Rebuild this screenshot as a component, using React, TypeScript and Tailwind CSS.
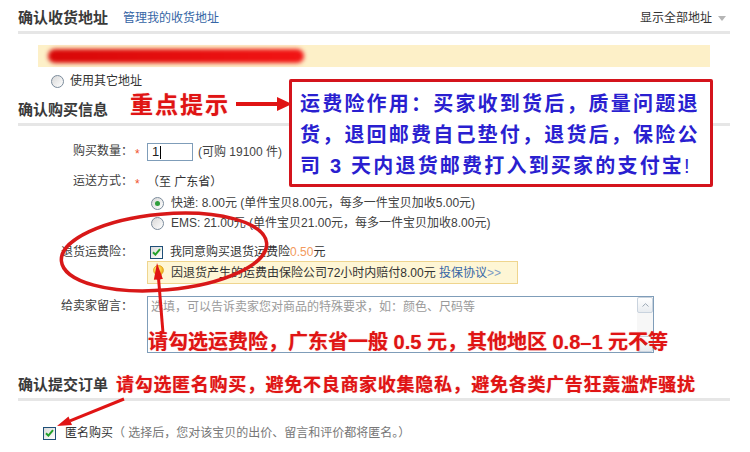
import React from 'react';

const Radio = ({ checked }: { checked?: boolean }) => (
  <span className="inline-flex h-[13px] w-[13px] shrink-0 items-center justify-center rounded-full border border-[#7b8b9b] bg-gradient-to-br from-[#d8d8d8] to-white">
    {checked && <span className="h-[5px] w-[5px] rounded-full bg-[#2f9e3c]" />}
  </span>
);

const Checkbox = () => (
  <span className="inline-flex h-[13px] w-[13px] shrink-0 items-center justify-center border border-[#1f4f78] bg-gradient-to-br from-[#dadada] to-white">
    <svg width="9" height="8" viewBox="0 0 9 8">
      <path d="M1 4.2l2.4 2.4L8 1.2" stroke="#22a12a" strokeWidth="2" fill="none" />
    </svg>
  </span>
);

const Bulb = () => (
  <svg width="11" height="16" viewBox="0 0 11 16" className="shrink-0">
    <defs>
      <radialGradient id="bulb" cx="0.4" cy="0.35" r="0.7">
        <stop offset="0" stopColor="#fff6b0" />
        <stop offset="0.6" stopColor="#f7c531" />
        <stop offset="1" stopColor="#e29a0e" />
      </radialGradient>
    </defs>
    <path d="M5.5 0.5C2.6 0.5 0.5 2.6 0.5 5.3c0 2 1.2 3 2 4.2.4.6.5 1.2.5 1.8h5c0-.6.1-1.2.5-1.8.8-1.2 2-2.2 2-4.2C10.5 2.6 8.4.5 5.5.5z" fill="url(#bulb)" stroke="#d8960f" strokeWidth="0.6" />
    <rect x="3" y="12" width="5" height="1.4" fill="#b9b9b9" />
    <rect x="3.4" y="13.6" width="4.2" height="1.4" fill="#a0a0a0" />
  </svg>
);

const SectionHead = ({ title, children }: { title: string; children?: React.ReactNode }) => (
  <div className="ml-[18px] mr-[20px] flex h-[29px] items-center border-b-[3px] border-[#e6e6e6]">
    <span className="text-[15px] font-bold text-[#3a3a3a]">{title}</span>
    {children}
  </div>
);

const Label = ({ text, star }: { text: string; star?: boolean }) => (
  <div className="flex shrink-0">
    <span className="w-[133px] text-right text-[#404040]">{text}</span>
    <span className="w-[14px] pl-[2px] pt-[3px] text-[12px] leading-[18px] text-[#f0522a]">{star ? '*' : ''}</span>
  </div>
);

export default function App() {
  return (
    <div className="relative h-[452px] w-[750px] overflow-hidden bg-white pt-[5px] font-['Liberation_Sans','Noto_Sans_CJK_SC',sans-serif] text-[12px] leading-[18px] text-[#404040]">
      <SectionHead title="确认收货地址">
        <span className="ml-[15px] text-[12px] text-[#3565a5]">管理我的收货地址</span>
        <span className="ml-auto flex items-center gap-[6px] pr-[4px] text-[12px] text-[#333]">
          显示全部地址
          <span className="h-0 w-0 border-x-[4px] border-t-[5px] border-x-transparent border-t-[#b5b5b5]" />
        </span>
      </SectionHead>

      <div className="ml-[38px] mt-[11px] flex h-[22px] w-[672px] items-center bg-[#fdf0c8]">
        <div className="ml-[10px] h-[14px] w-[256px] rounded-full bg-gradient-to-r from-[#d80808] to-[#f21414] blur-[2px]" />
      </div>

      <div className="ml-[51px] mt-[6px] flex h-[16px] items-center gap-[6px]">
        <Radio />
        <span className="text-[#333]">使用其它地址</span>
      </div>

      <div className="mt-[8px]">
        <SectionHead title="确认购买信息" />
      </div>

      <div className="mt-[17px] flex h-[18px] items-center">
        <Label text="购买数量：" star />
        <div className="flex h-[18px] w-[46px] items-center border border-[#7f9db9] pl-[4px] text-[13px] text-[#222]">
          1<span className="ml-[1px] h-[13px] w-px bg-black" />
        </div>
        <span className="ml-[5px] text-[#444]">(可购 19100 件)</span>
      </div>

      <div className="mt-[12px] flex h-[18px] items-center">
        <Label text="运送方式：" star />
        <span className="text-[#333]">（至 广东省）</span>
      </div>

      <div className="ml-[151px] mt-[4px] flex h-[16px] items-center gap-[7px]">
        <Radio checked />
        <span className="text-[#404040]">快递: 8.00元 (单件宝贝8.00元，每多一件宝贝加收5.00元)</span>
      </div>
      <div className="ml-[151px] mt-[4px] flex h-[16px] items-center gap-[7px]">
        <Radio />
        <span className="text-[#404040]">EMS: 21.00元 (单件宝贝21.00元，每多一件宝贝加收8.00元)</span>
      </div>

      <div className="mt-[13px] flex h-[16px] items-center">
        <Label text="退货运费险：" />
        <div className="ml-[3px] flex items-center gap-[7px]">
          <Checkbox />
          <span className="text-[#333]">
            我同意购买退货运费险<span className="text-[#f39a5c]">0.50</span>元
          </span>
        </div>
      </div>

      <div className="ml-[147px] mt-[1px] flex h-[23px] w-[371px] items-center gap-[7px] border border-[#efd58e] bg-[#fef6d5] pl-[5px]">
        <Bulb />
        <span className="text-[#333]">
          因退货产生的运费由保险公司72小时内赔付8.00元 <span className="text-[#3565a5]">投保协议</span>
          <span className="text-[#7d9bc4]">&gt;&gt;</span>
        </span>
      </div>

      <div className="mt-[12px] flex">
        <div className="pt-px">
          <Label text="给卖家留言：" />
        </div>
        <div className="flex h-[57px] w-[507px] border border-[#7f9db9] bg-white">
          <div className="flex-1 pl-[3px] pt-px text-[#9a9a9a]">选填，可以告诉卖家您对商品的特殊要求，如：颜色、尺码等</div>
          <div className="flex w-[16px] flex-col justify-between bg-[#f7f7f7]">
            <div className="flex h-[16px] items-center justify-center rounded-[2px] border border-[#c9d3de] bg-gradient-to-b from-white to-[#e8ecf0]">
              <svg width="7" height="4" viewBox="0 0 7 4"><path d="M0.5 3.5L3.5 0.7 6.5 3.5" stroke="#9aa7b5" fill="none" /></svg>
            </div>
            <div className="flex h-[16px] items-center justify-center rounded-[2px] border border-[#c9d3de] bg-gradient-to-b from-white to-[#e8ecf0]">
              <svg width="7" height="4" viewBox="0 0 7 4"><path d="M0.5 0.5L3.5 3.3 6.5 0.5" stroke="#9aa7b5" fill="none" /></svg>
            </div>
          </div>
        </div>
      </div>

      <div className="mt-[19px]">
        <SectionHead title="确认提交订单">
          <span className="ml-[8px] text-[18px] font-bold tracking-[0.7px] text-[#e01414] [text-shadow:0_0_1px_rgba(220,0,0,0.5)]">
            请勾选匿名购买，避免不良商家收集隐私，避免各类广告狂轰滥炸骚扰
          </span>
        </SectionHead>
      </div>

      <div className="ml-[43px] mt-[24px] flex h-[16px] items-center gap-[9px]">
        <Checkbox />
        <span className="text-[#333]">
          匿名购买<span className="text-[#777]">（ 选择后，您对该宝贝的出价、留言和评价都将匿名。）</span>
        </span>
      </div>

      {/* annotations drawn over the page */}
      <div className="absolute left-[130px] top-[92px] text-[23px] font-bold leading-[26px] tracking-[2px] text-[#e01414] [text-shadow:0_0_1px_rgba(220,0,0,0.5)]">
        重点提示
      </div>

      <div className="absolute left-[289px] top-[79px] h-[108px] w-[424px] rounded-[2px] border-[3px] border-[#d4141c] bg-white pl-[8px] pt-[7px] text-[20px] font-bold leading-[31px] tracking-[2.2px] text-[#2a1fd0]">
        运费险作用：买家收到货后，质量问题退
        <br />
        货，退回邮费自己垫付，退货后，保险公
        <br />
        司 3 天内退货邮费打入到买家的支付宝<span className="font-normal">!</span>
      </div>

      <div className="absolute left-[148px] top-[330px] text-[20px] font-bold leading-[24px] text-[#e01414] [text-shadow:0_0_1px_rgba(220,0,0,0.5)]">
        请勾选运费险，广东省一般 0.5 元，其他地区 0.8–1 元不等
      </div>

      <svg className="pointer-events-none absolute left-0 top-0" width="750" height="452" viewBox="0 0 750 452">
        <line x1="236" y1="104" x2="280" y2="104" stroke="#e01414" strokeWidth="4" />
        <polygon points="277,97 292,104 277,111" fill="#e01414" />
        <ellipse cx="164" cy="252" rx="103" ry="38" transform="rotate(-5 164 252)" fill="none" stroke="#d81818" strokeWidth="3.5" />
        <line x1="163" y1="333" x2="158.5" y2="278" stroke="#e01414" strokeWidth="3" />
        <polygon points="157,263 162.9,279 153.9,279.8" fill="#e01414" />
        <line x1="124" y1="399" x2="70" y2="420.8" stroke="#e01414" strokeWidth="3" />
        <polygon points="57,426 68.5,416.5 72,425" fill="#e01414" />
      </svg>
    </div>
  );
}
